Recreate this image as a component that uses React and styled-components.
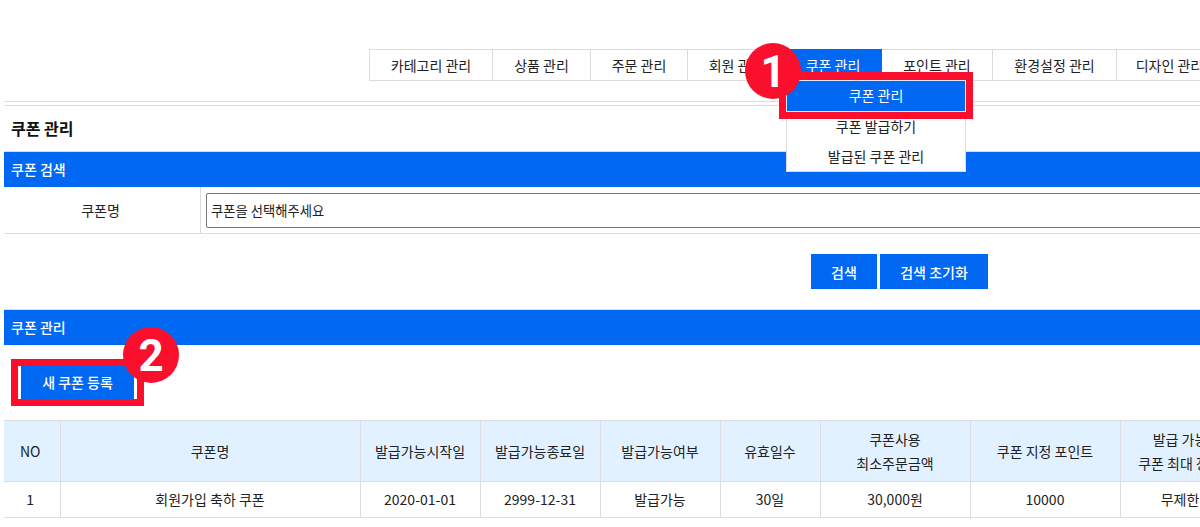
import styled, { createGlobalStyle } from "styled-components";

const BLUE = "#0068f2";
const RED = "#fa0f2d";
const LINE = "#dcdcdc";

const GlobalStyle = createGlobalStyle`
	html, body {
		margin: 0;
		padding: 0;
		background: #fff;
		overflow: hidden;
	}
	body {
		font-family: "Noto Sans CJK KR", "Noto Sans", sans-serif;
		font-size: 14px;
		color: #222;
	}
`;

const Page = styled.div`
	width: 1200px;
	height: 527px;
	padding: 49px 0 0 4px;
	box-sizing: border-box;
	overflow: hidden;
`;

const Nav = styled.nav`
	display: flex;
	height: 32px;
	margin-left: 365px;
	width: 900px;
`;

const Tab = styled.div`
	position: relative;
	flex: none;
	width: ${(p) => p.$w}px;
	box-sizing: border-box;
	border: 1px solid ${LINE};
	border-left-width: ${(p) => (p.$first ? 1 : 0)}px;
	background: ${(p) => (p.$active ? BLUE : "#fff")};
	color: ${(p) => (p.$active ? "#fff" : "#222")};
	border-color: ${(p) => (p.$active ? BLUE : LINE)};
	display: flex;
	align-items: center;
	justify-content: center;
`;

const Dropdown = styled.div`
	position: absolute;
	top: 30px;
	left: 1px;
	width: 180px;
	height: 92px;
	box-sizing: border-box;
	background: #fff;
	border: 1px solid ${LINE};
	border-top: 0;
	z-index: 2;
`;

const DropItem = styled.div`
	height: ${(p) => (p.$active ? 32 : 30)}px;
	padding-bottom: 2px;
	box-sizing: border-box;
	display: flex;
	align-items: center;
	justify-content: center;
	color: #222;
	${(p) =>
		p.$active &&
		`
		margin: 0 -1px;
		background: ${BLUE};
		color: #fff;
		border: 1px solid #dfe9f5;
		box-shadow: 0 0 0 7px ${RED}, 0 -1px 0 7px ${RED};
	`}
`;

const Badge = styled.div`
	position: absolute;
	top: ${(p) => p.$top}px;
	left: ${(p) => p.$left}px;
	width: 56px;
	height: 56px;
	border-radius: 50%;
	background: ${RED};
	color: #fff;
	font-family: "Roboto", sans-serif;
	font-size: 44px;
	font-weight: 700;
	line-height: 58px;
	text-align: center;
	z-index: 3;
`;

const Rules = styled.div`
	margin-top: 20px;
	height: 5px;
	box-sizing: border-box;
	border-top: 1px solid ${LINE};
	border-bottom: 1px solid ${LINE};
`;

const Title = styled.h1`
	margin: 0;
	height: 45px;
	padding-left: 7px;
	font-size: 16px;
	font-weight: 700;
	line-height: 44px;
	color: #111;
`;

const SectionBar = styled.div`
	height: 36px;
	padding-left: 7px;
	background: ${BLUE};
	border-top: 1px solid ${LINE};
	box-sizing: border-box;
	color: #fff;
	font-weight: 500;
	line-height: 34px;
`;

const SearchRow = styled.div`
	display: grid;
	grid-template-columns: 197px 1fr;
	height: 47px;
	border-bottom: 1px solid ${LINE};
	box-sizing: border-box;
`;

const SearchLabel = styled.div`
	display: flex;
	align-items: center;
	justify-content: center;
	padding-right: 3px;
	border-right: 1px solid ${LINE};
`;

const SearchCell = styled.div`
	padding: 6px 0 0 5px;
`;

const SelectBox = styled.div`
	height: 35px;
	width: 1100px;
	box-sizing: border-box;
	border: 1px solid #767676;
	border-radius: 2px;
	padding-left: 4px;
	font-size: 13.333px;
	line-height: 33px;
`;

const ButtonRow = styled.div`
	display: flex;
	gap: 3px;
	height: 75px;
	padding: 20px 0 0 807px;
	box-sizing: border-box;
`;

const Button = styled.button`
	height: 35px;
	width: ${(p) => p.$w}px;
	padding: 0;
	border: 0;
	background: ${BLUE};
	color: #fff;
	font-family: inherit;
	font-size: 14px;
	font-weight: 500;
`;

const ToolRow = styled.div`
	height: 75px;
	padding: 14px 0 0 7px;
	box-sizing: border-box;
	display: flex;
	align-items: flex-start;
`;

const Highlight = styled.div`
	border: 7px solid ${RED};
	line-height: 0;
`;

const AddButton = styled(Button)`
	width: 119px;
	height: 33px;
	padding-bottom: 2px;
	border-left: 3px solid #fff;
	border-right: 3px solid #fff;
`;

const TableClip = styled.div`
	overflow: hidden;
`;

const Table = styled.table`
	table-layout: fixed;
	width: 1236px;
	border-collapse: collapse;
	text-align: center;

	th,
	td {
		border: 1px solid ${LINE};
		padding: 0;
		font-weight: 400;
	}
	th:first-child,
	td:first-child {
		border-left: 0;
		padding-right: 3px;
	}
	th {
		height: 60px;
		background: #e2f1ff;
		line-height: 24px;
	}
	td {
		height: 36px;
		padding-bottom: 2px;
		box-sizing: border-box;
	}
`;

const tabs = [
	["카테고리 관리", 124],
	["상품 관리", 98],
	["주문 관리", 97],
	["회원 관리", 97],
	["쿠폰 관리", 97, true],
	["포인트 관리", 111],
	["환경설정 관리", 124],
	["디자인 관리", 106],
];

const columns = [56, 300, 120, 120, 120, 100, 150, 150, 120];

const headers = [
	"NO",
	"쿠폰명",
	"발급가능시작일",
	"발급가능종료일",
	"발급가능여부",
	"유효일수",
	<>쿠폰사용<br />최소주문금액</>,
	"쿠폰 지정 포인트",
	<>발급 가능<br />쿠폰 최대 장수</>,
];

const row = ["1", "회원가입 축하 쿠폰", "2020-01-01", "2999-12-31", "발급가능", "30일", "30,000원", "10000", "무제한"];

export default function App() {
	return (
		<>
			<GlobalStyle />
			<Page>
				<Nav>
					{tabs.map(([label, w, active], i) => (
						<Tab key={label} $w={w} $first={i === 0} $active={active}>
							{label}
							{active && (
								<Dropdown>
									<DropItem $active>쿠폰 관리</DropItem>
									<DropItem>쿠폰 발급하기</DropItem>
									<DropItem>발급된 쿠폰 관리</DropItem>
								</Dropdown>
							)}
						</Tab>
					))}
				</Nav>
				<Badge $top={43} $left={745}>1</Badge>
				<Rules />
				<Title>쿠폰 관리</Title>
				<SectionBar>쿠폰 검색</SectionBar>
				<SearchRow>
					<SearchLabel>쿠폰명</SearchLabel>
					<SearchCell>
						<SelectBox>쿠폰을 선택해주세요</SelectBox>
					</SearchCell>
				</SearchRow>
				<ButtonRow>
					<Button $w={66}>검색</Button>
					<Button $w={108}>검색 초기화</Button>
				</ButtonRow>
				<SectionBar>쿠폰 관리</SectionBar>
				<ToolRow>
					<Highlight>
						<AddButton>새 쿠폰 등록</AddButton>
					</Highlight>
				</ToolRow>
				<Badge $top={327} $left={123}>2</Badge>
				<TableClip>
					<Table>
						<colgroup>
							{columns.map((w, i) => (
								<col key={i} width={w} />
							))}
						</colgroup>
						<thead>
							<tr>
								{headers.map((h, i) => (
									<th key={i}>{h}</th>
								))}
							</tr>
						</thead>
						<tbody>
							<tr>
								{row.map((c, i) => (
									<td key={i}>{c}</td>
								))}
							</tr>
						</tbody>
					</Table>
				</TableClip>
			</Page>
		</>
	);
}
